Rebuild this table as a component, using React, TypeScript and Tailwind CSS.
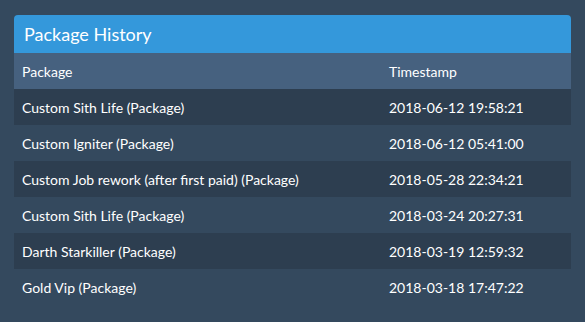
const rows = [
  { name: 'Custom Sith Life (Package)', time: '2018-06-12 19:58:21' },
  { name: 'Custom Igniter (Package)', time: '2018-06-12 05:41:00' },
  { name: 'Custom Job rework (after first paid) (Package)', time: '2018-05-28 22:34:21' },
  { name: 'Custom Sith Life (Package)', time: '2018-03-24 20:27:31' },
  { name: 'Darth Starkiller (Package)', time: '2018-03-19 12:59:32' },
  { name: 'Gold Vip (Package)', time: '2018-03-18 17:47:22' },
];

export default function App() {
  return (
    <div className="min-h-[322px] w-[585px] bg-[#34495e] px-[14px] pt-[15px] font-['Lato',sans-serif] text-white">
      <div className="overflow-hidden rounded-t-[4px]">
        <div className="flex h-[38px] items-center bg-[#3498db] px-[10px] text-[18px]">
          Package History
        </div>
        <div className="grid grid-cols-[367px_1fr] text-[14px]">
          <div className="flex h-[36px] items-center bg-[#46617f] px-2">Package</div>
          <div className="flex h-[36px] items-center bg-[#46617f] px-2">Timestamp</div>
          {rows.map((row, i) => {
            const bg = i % 2 === 0 ? 'bg-[#2d3e50]' : 'bg-[#34495e]';
            return [
              <div key={`n${i}`} className={`flex h-[36px] items-center px-2 ${bg}`}>
                {row.name}
              </div>,
              <div key={`t${i}`} className={`flex h-[36px] items-center px-2 ${bg}`}>
                {row.time}
              </div>,
            ];
          })}
        </div>
      </div>
    </div>
  );
}
